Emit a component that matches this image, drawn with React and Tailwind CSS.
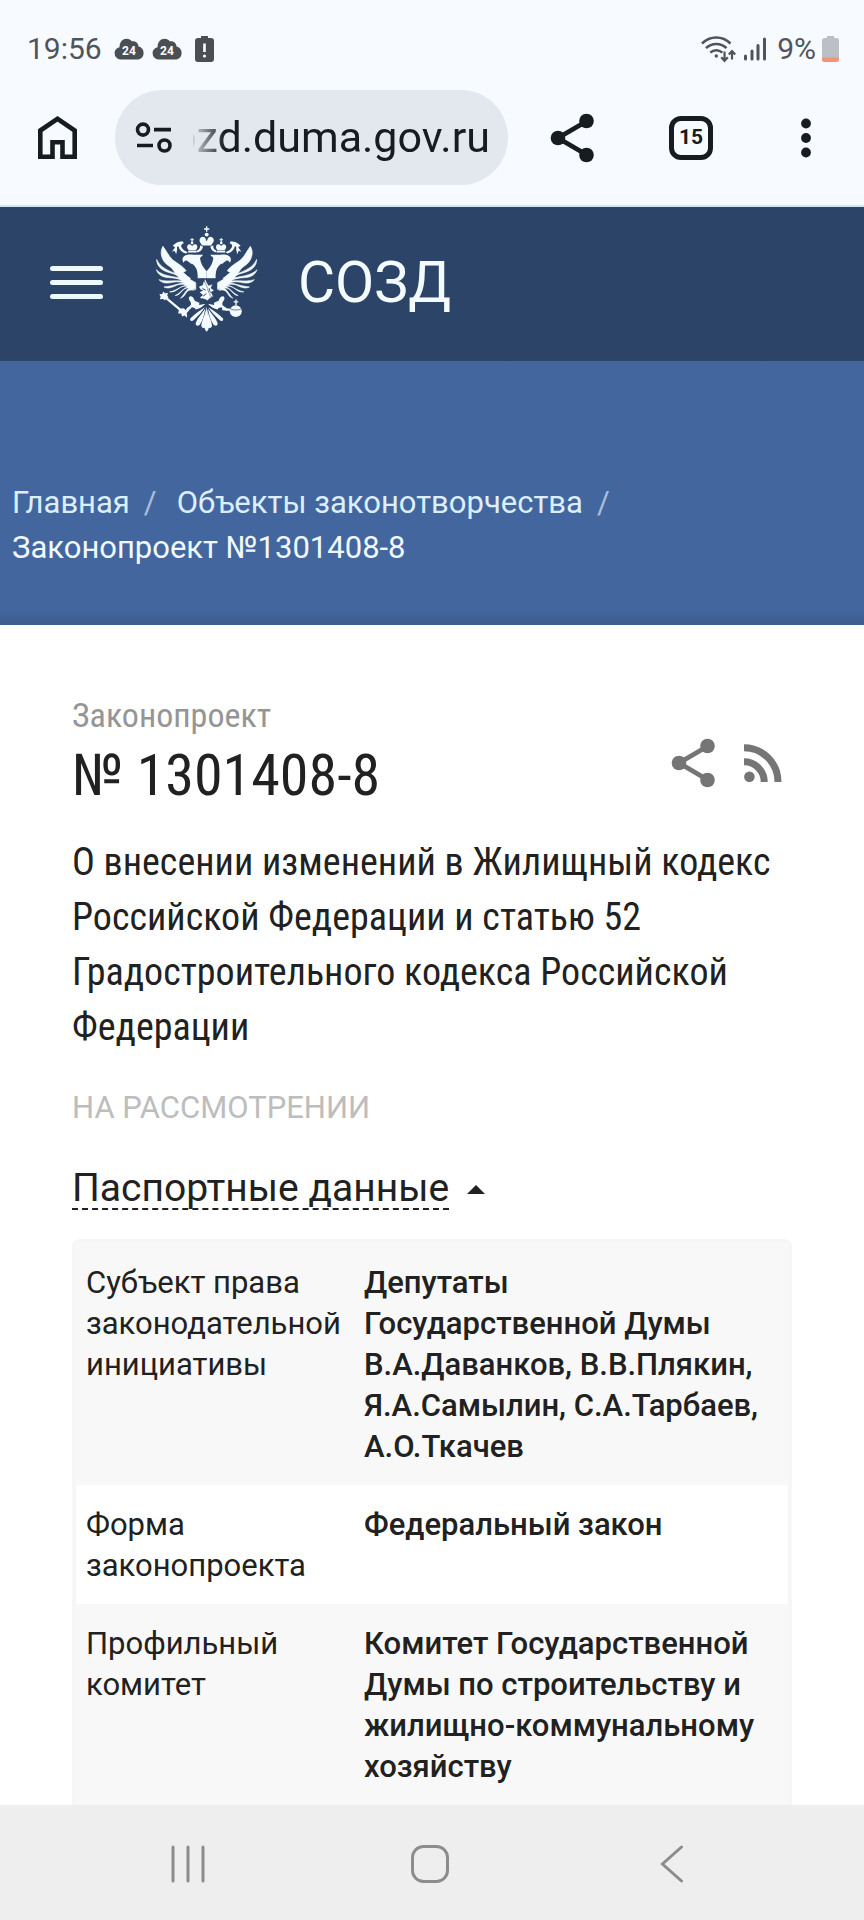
import React from "react";

const condensed = "font-['Roboto_Condensed',Roboto,'Noto_Sans',sans-serif]";

function CloudBadge() {
  return (
    <svg viewBox="0 0 30 22" className="h-[22px] w-[30px]" aria-hidden="true">
      <path
        d="M6.5 21.5A6.3 6.3 0 0 1 .6 15.200C.6 11.900 3 9.700 5.600 9.200C5.400 4.200 8.700 .8 12.600 .8c2.400 0 4 1 5.200 2.500C21.500 2.700 24.300 5 24.600 8.600C27.600 9.200 29.600 11.700 29.600 14.900c0 3.800-2.700 6.600-6.300 6.600Z"
        fill="#4b4f54"
      />
      <text x="15" y="16.500" textAnchor="middle" fontFamily="Roboto, sans-serif" fontWeight="700" fontSize="12" fill="#fff">
        24
      </text>
    </svg>
  );
}

function StatusBar() {
  return (
    <div className="flex items-center justify-between pt-[31px] pr-[25px] pl-[27px] text-[30px] leading-9 text-[#50545a]">
      <div className="flex items-center">
        <span>19:56</span>
        <span className="ml-3 flex items-center gap-2">
          <CloudBadge />
          <CloudBadge />
        </span>
        <svg viewBox="0 0 19 26" className="ml-[13px] h-[26px] w-[19px]" aria-hidden="true">
          <path d="M6 0h7v2h3a3 3 0 0 1 3 3v18a3 3 0 0 1-3 3H3a3 3 0 0 1-3-3V5a3 3 0 0 1 3-3h3Z" fill="#4b4f54" />
          <path d="M9.500 7.500v8.500" stroke="#fff" strokeWidth="2.600" />
          <circle cx="9.500" cy="20" r="1.600" fill="#fff" />
        </svg>
      </div>
      <div className="flex items-center">
        <svg viewBox="0 0 36 28" className="h-7 w-9" fill="none" stroke="#50545a" aria-hidden="true">
          <path d="M2 8.500C10 .4 22.500 .4 30.500 8.500" strokeWidth="2.500" />
          <path d="M6 13.200c5.600-5.600 15-5.600 20.500 0" strokeWidth="2.500" />
          <path d="M10.300 17.600c3.400-3.300 8.600-3.300 12 0" strokeWidth="2.500" />
          <circle cx="16.300" cy="21" r="1.700" fill="#50545a" stroke="none" />
          <path d="M24.500 16.500v9M21.200 22.300l3.300 3.500 3.300-3.500M32 24.500v-8M28.800 19.600l3.200-3.400 3.200 3.400" strokeWidth="2.200" />
        </svg>
        <svg viewBox="0 0 22 24" className="ml-2 h-6 w-[22px]" stroke="#50545a" strokeWidth="3" strokeLinecap="round" aria-hidden="true">
          <path d="M1.500 19v3M8 14v8M14 8.500V22" />
          <path d="M20.500 2v20" />
        </svg>
        <span className="ml-[11px]">9%</span>
        <svg viewBox="0 0 17 26" className="ml-1.5 h-[26px] w-[17px]" aria-hidden="true">
          <path d="M5 0h7v2h2.500A2.500 2.500 0 0 1 17 4.500V22H0V4.500A2.500 2.500 0 0 1 2.500 2H5Z" fill="#bcbfc6" />
          <path d="M0 21.500h17v2A2.500 2.500 0 0 1 14.500 26h-12A2.500 2.500 0 0 1 0 23.500Z" fill="#f2937a" />
        </svg>
      </div>
    </div>
  );
}

function Toolbar() {
  return (
    <div className="flex items-center pt-[23px] pr-12 pb-5 pl-[38px]">
      <button type="button" aria-label="Домой">
        <svg viewBox="0 0 39 43" className="block h-[43px] w-[39px]" fill="none" stroke="#171c20" strokeWidth="4.600" aria-hidden="true">
          <path d="M2.300 14.500 19.500 2.800 36.700 14.500V40.700H24.500V26.300h-10V40.700H2.300Z" />
        </svg>
      </button>
      <div className="ml-[38px] flex h-[95px] min-w-0 flex-1 items-center rounded-full bg-[#e3e8ef] pr-[18px] pl-5">
        <svg viewBox="0 0 38 32" className="h-8 w-[38px] shrink-0" fill="none" stroke="#171c20" strokeWidth="3.600" aria-hidden="true">
          <circle cx="8" cy="7.600" r="5.500" />
          <path d="M19 7.600h17M2 23.500h16" />
          <circle cx="29.500" cy="23.500" r="5.500" />
        </svg>
        <input
          type="text"
          aria-label="Адрес страницы"
          defaultValue="sozd.duma.gov.ru"
          className="ml-5 w-full min-w-0 bg-transparent indent-[-43px] text-[43px] text-[#171c20] outline-none [mask-image:linear-gradient(to_right,rgb(0_0_0/0.1),black_32px)]"
        />
      </div>
      <button type="button" aria-label="Поделиться" className="ml-[42px]">
        <svg viewBox="0 0 44 50" className="block h-[50px] w-11" fill="#171c20" aria-hidden="true">
          <path d="M37 8 8 25 37 42" fill="none" stroke="#171c20" strokeWidth="4.800" />
          <circle cx="36.500" cy="8" r="7.300" />
          <circle cx="8" cy="25" r="7.300" />
          <circle cx="36.500" cy="42" r="7.300" />
        </svg>
      </button>
      <button
        type="button"
        aria-label="Вкладки: 15"
        className="ml-[75px] flex size-11 items-center justify-center rounded-xl border-[5px] border-[#171c20] text-[21px] leading-none font-bold text-[#171c20]"
      >
        15
      </button>
      <button type="button" aria-label="Меню браузера" className="ml-[83px]">
        <svg viewBox="0 0 20 44" className="block h-11 w-5" fill="#171c20" aria-hidden="true">
          <circle cx="10" cy="7.500" r="4.900" />
          <circle cx="10" cy="22" r="4.900" />
          <circle cx="10" cy="36.500" r="4.900" />
        </svg>
      </button>
    </div>
  );
}

function EagleHalf() {
  return (
    <g>
      <g stroke="#f4fbff" strokeWidth="2" strokeLinejoin="round">
        <path d="M67 94C76 104 82 120 96 134C110 145 126 152 137 167L127 173C136 176 142 186 148 193L166 203L166 224L150 216C120 200 84 160 67 94Z" />
        <path d="M67 94C56 110 62 138 84 152C100 164 122 176 140 196L150 190C120 170 84 150 67 94Z" />
        <path d="M48 133C48 152 62 166 84 172C104 177 126 186 144 204L148 196C124 176 64 172 48 133Z" />
        <path d="M47 164C52 180 68 188 88 188C108 189 128 194 148 208L150 201C124 182 70 190 47 164Z" />
        <path d="M55 194C64 205 80 206 96 202C114 198 130 202 150 212L150 205C124 190 84 204 55 194Z" />
        <path d="M70 216C82 223 98 216 108 211C122 205 136 208 154 216L150 207C126 198 102 214 70 216Z" />
        <path d="M87 231C100 233 108 226 117 219C128 211 140 213 156 219L150 210C130 206 112 226 87 231Z" />
        <path d="M104 242C116 241 120 233 128 225C136 218 146 218 158 222L152 213C134 211 122 234 104 242Z" />
        <path d="M120 250C132 246 133 238 139 231C144 225 152 224 162 226L154 217C140 217 134 236 120 250Z" />
      </g>
      <path d="M127 128C132 118 146 116 158 119L188 119C186 124 180 125 179 129C182 150 192 160 199 168V190H172C172 170 170 158 158 148C150 142 142 140 140 137C135 134 131 137 129 143C126 138 125 132 127 128Z" />
      <path d="M146 140L158 143L152 147Z" />
      <path d="M141 91C146 84 154 88 155 94C156 88 166 84 170 91C173 98 168 103 166 105H145C142 102 138 98 141 91ZM143 107H169V112H143Z" />
      <circle cx="155" cy="83" r="4" />
      <path d="M153.500 68h3v4h4v3h-4v5h-3v-5h-4v-3h4Z" />
      <path d="M96 92C101 87 106 83 113 80L126 78L130 84C122 86 120 92 124 98C128 105 134 108 142 111L136 115C124 112 116 104 114 94C112 92 108 96 110 102L107 117L102 107L94 110L103 98C104 94 100 93 96 92Z" />
      <path d="M170 106C178 102 180 96 179 90L188 95C186 104 180 111 170 112Z" />
      <path d="M149 244C157 244 160 250 163 258L177 264L176 272C164 268 154 274 151 282L139 288C134 286 138 280 145 276C154 271 153 265 148 258C144 252 144 247 149 244Z" />
      <path d="M194 268C186 276 176 282 166 284C162 276 154 280 148 276C152 270 162 268 172 270C182 272 188 266 194 268Z" />
      <path d="M193 277C178 289 160 298 149 312C149 321 156 320 160 316C172 303 186 292 193 277Z" />
      <path d="M195 280C184 298 170 312 166 325C165 335 173 335 178 330C187 318 192 300 195 280Z" />
      <path d="M197 283C194 302 182 322 183 334C185 342 193 341 196 336Z" />
    </g>
  );
}

function Emblem() {
  return (
    <svg viewBox="44 32 312 320" className="mb-1.5 h-[106px] w-[104px]" fill="#f4fbff" aria-hidden="true">
      <EagleHalf />
      <g transform="translate(398 0) scale(-1 1)">
        <EagleHalf />
      </g>
      <path d="M197 33h4v6h6v4h-6v6h-4v-6h-6v-4h6Z" />
      <circle cx="199" cy="58" r="6" />
      <path d="M178 72C181 62 194 61 197 74L199 78L201 74C204 61 217 62 220 72C223 81 214 85 213 91H185C184 85 175 81 178 72Z" />
      <path d="M199 275L193 318C190 334 192 345 199 351C206 345 208 334 205 318Z" />
      <path d="M171 191h56v63c-12 0-22 3-28 9c-6-6-16-9-28-9Z" fill="#2c4468" />
      <path d="M176 216C184 209 188 214 189 203C191 195 198 195 198 202L205 212L216 208L211 220L221 226L212 232L219 246C208 242 210 253 200 257C194 248 186 256 179 248L188 240L178 232L189 226L181 224Z" />
      <path d="M190 192L214 252M186 220l10 6M188 244l10-8M206 220l4 14" stroke="#2c4468" strokeWidth="3" fill="none" />
      <path d="M194 194l4 20 8 14 6 22" stroke="#f4fbff" strokeWidth="2.500" fill="none" />
      <path d="M70 244L132 296" stroke="#f4fbff" strokeWidth="7" />
      <path d="M56 238l9-1 3-7 5 5 9-1-2 8 4 6-8 2-2 7-7-5-9 1 2-8Z" />
      <path d="M116 282l14-2 7 7 12-4-10 12 1 14-8-7-7 3-3-9-9 0Z" />
      <circle cx="287" cy="289" r="18" />
      <path d="M246 283l28 2" stroke="#f4fbff" strokeWidth="7" />
      <path d="M285.500 254h4v5h5v4h-5v8h-4v-8h-5v-4h5Z" />
      <path d="M270 282c10 5 24 5 34 0" stroke="#2c4468" strokeWidth="2" fill="none" />
    </svg>
  );
}

function SiteHeader() {
  return (
    <header className="flex items-center border-t-2 border-[#d3e4f5] bg-[#2c4468] pt-[19px] pb-[23px] pl-[50px]">
      <button type="button" aria-label="Меню" className="flex w-[53px] flex-col gap-[9px]">
        <span className="h-[5px] rounded-sm bg-[#eef8ff]" />
        <span className="h-[5px] rounded-sm bg-[#eef8ff]" />
        <span className="h-[5px] rounded-sm bg-[#eef8ff]" />
      </button>
      <a href="#" className="ml-[52px] flex items-center gap-[39px]">
        <Emblem />
        <span className="text-[57px] leading-none text-[#f4fbff]">СОЗД</span>
      </a>
    </header>
  );
}

function Breadcrumbs() {
  return (
    <nav
      aria-label="Навигационная цепочка"
      className="bg-[#43669e] bg-linear-to-t from-[#3b5c8c] to-[#43669e] to-[16px] px-3 pt-[119px] pb-[55px] text-[31px] leading-[45px] text-[#dcefff]"
    >
      <a href="#">Главная</a>
      <span className="mr-5 ml-3.5 text-[#a9bddb]">/</span>
      <a href="#">Объекты законотворчества</a>
      <span className="ml-3.5 text-[#a9bddb]">/</span>
      <span className="block text-[#f0f9ff]">Законопроект №1301408-8</span>
    </nav>
  );
}

const rows = [
  {
    label: "Субъект права законодательной инициативы",
    value: ["Депутаты", "Государственной Думы В.А.Даванков, В.В.Плякин, Я.А.Самылин, С.А.Тарбаев, А.О.Ткачев"],
  },
  { label: "Форма законопроекта", value: ["Федеральный закон"] },
  {
    label: "Профильный комитет",
    value: ["Комитет Государственной Думы по строительству и жилищно-коммунальному хозяйству"],
  },
];

function Passport() {
  return (
    <table className="mt-[29px] w-full table-fixed border-separate border-spacing-0 rounded-t-lg border-x-4 border-t-4 border-[#f6f6f6] text-[31px] leading-[41px] text-[#212121]">
      <colgroup>
        <col className="w-[282px]" />
        <col />
      </colgroup>
      <tbody>
        {rows.map((row) => (
          <tr key={row.label} className="align-top odd:bg-[#f8f8f8] even:bg-white">
            <th scope="row" className="pt-[19px] pb-[18px] pl-[10px] text-left font-normal">
              {row.label}
            </th>
            <td className="pt-[19px] pb-[18px] pl-[6px] font-medium">
              {row.value.map((line) => (
                <span key={line} className="block">
                  {line}
                </span>
              ))}
            </td>
          </tr>
        ))}
      </tbody>
    </table>
  );
}

function Bill() {
  return (
    <main className="flex-1 bg-white px-[72px] pt-[70px]">
      <div className="flex items-start justify-between">
        <h1 className={`${condensed} text-[#212121]`}>
          <span className="block text-[34px] leading-10 text-[#959595]">Законопроект</span>
          <span className="block text-[58px] leading-[80px]">№ 1301408-8</span>
        </h1>
        <div className="mt-[43px] mr-2.5 flex items-center gap-[29px]">
          <button type="button" aria-label="Поделиться законопроектом">
            <svg viewBox="0 0 44 50" className="block h-[50px] w-11" fill="#757575" aria-hidden="true">
              <path d="M37 8 8 25 37 42" fill="none" stroke="#757575" strokeWidth="4.800" />
              <circle cx="36.500" cy="8" r="7.300" />
              <circle cx="8" cy="25" r="7.300" />
              <circle cx="36.500" cy="42" r="7.300" />
            </svg>
          </button>
          <a href="#" aria-label="RSS">
            <svg viewBox="0 0 38 38" className="block size-[38px]" fill="none" stroke="#757575" strokeWidth="7" aria-hidden="true">
              <path d="M0 3.800A34 34 0 0 1 34 38M0 17.800A20 20 0 0 1 20.200 38" />
              <circle cx="5.400" cy="32.800" r="5.300" fill="#757575" stroke="none" />
            </svg>
          </a>
        </div>
      </div>
      <p className={`${condensed} mt-5 text-[38px] leading-[55px] text-[#212121]`}>
        О внесении изменений в Жилищный кодекс Российской Федерации и статью 52 Градостроительного кодекса Российской
        Федерации
      </p>
      <p className="mt-[35px] text-[31px] leading-9 text-[#bdbdbd]">НА РАССМОТРЕНИИ</p>
      <h2 className="mt-[42px]">
        <button type="button" aria-expanded="true" className="flex items-center gap-[18px] text-[39px] leading-10 text-[#212121]">
          <span className="border-b-2 border-dashed border-[#212121]">Паспортные данные</span>
          <svg viewBox="0 0 18 9" className="h-[9px] w-[18px]" fill="#212121" aria-hidden="true">
            <path d="M0 9 9 0l9 9Z" />
          </svg>
        </button>
      </h2>
      <Passport />
    </main>
  );
}

function SystemNav() {
  return (
    <footer className="flex items-center justify-between bg-[#eeeeee] pt-10 pr-[173px] pb-[37px] pl-[169px]">
      <button type="button" aria-label="Недавние приложения">
        <svg viewBox="0 0 38 38" className="block size-[38px]" stroke="#8c8c8c" strokeWidth="3" strokeLinecap="round" aria-hidden="true">
          <path d="M4 2v34M19 2v34M34 2v34" />
        </svg>
      </button>
      <button type="button" aria-label="Главный экран">
        <svg viewBox="0 0 38 38" className="block size-[38px]" fill="none" stroke="#8c8c8c" strokeWidth="3" aria-hidden="true">
          <rect x="1.500" y="1.500" width="35" height="35" rx="11" />
        </svg>
      </button>
      <button type="button" aria-label="Назад">
        <svg viewBox="0 0 38 38" className="block size-[38px]" fill="none" stroke="#8c8c8c" strokeWidth="3" strokeLinecap="round" aria-hidden="true">
          <path d="M28.500 2 9.500 19l19 17" />
        </svg>
      </button>
    </footer>
  );
}

export default function App() {
  return (
    <div className="flex min-h-screen flex-col bg-[#f7faff] font-[Roboto,'Noto_Sans',sans-serif]">
      <StatusBar />
      <Toolbar />
      <SiteHeader />
      <Breadcrumbs />
      <Bill />
      <SystemNav />
    </div>
  );
}
